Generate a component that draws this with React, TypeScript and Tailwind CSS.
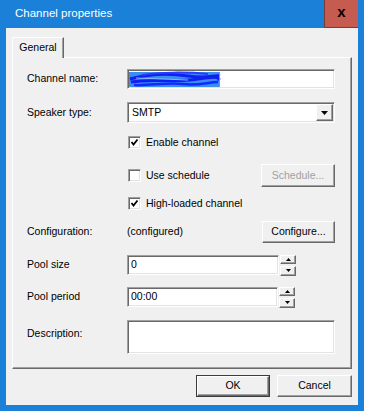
import React from "react";

const raised =
  "border border-t-white border-l-white border-r-[#696969] border-b-[#696969] shadow-[inset_-1px_-1px_0_#a0a0a0] bg-[#f0f0f0]";
const sunken =
  "border border-t-[#a0a0a0] border-l-[#a0a0a0] border-r-white border-b-white shadow-[inset_1px_1px_0_#696969,inset_-1px_-1px_0_#e3e3e3] bg-white";

function Checkbox({ checked }: { checked?: boolean }) {
  return (
    <div className={`${sunken} flex h-[13px] w-[13px] items-center justify-center`}>
      {checked && (
        <svg width="9" height="9" viewBox="0 0 9 9">
          <polyline points="1.5,4 3.5,6.5 7.5,1.5" fill="none" stroke="#000" strokeWidth="1.8" />
        </svg>
      )}
    </div>
  );
}

function Spinner() {
  return (
    <div className="ml-px flex h-[21px] flex-col justify-between">
      <div className={`${raised} flex h-[9px] w-[16px] items-center justify-center`}>
        <svg width="5" height="3" viewBox="0 0 5 3">
          <polygon points="0,3 5,3 2.5,0" fill="#000" />
        </svg>
      </div>
      <div className={`${raised} flex h-[10px] w-[16px] items-center justify-center`}>
        <svg width="5" height="3" viewBox="0 0 5 3">
          <polygon points="0,0 5,0 2.5,3" fill="#000" />
        </svg>
      </div>
    </div>
  );
}

function Label({ children }: { children: React.ReactNode }) {
  return <div className="w-[100px] shrink-0">{children}</div>;
}

export default function App() {
  return (
    <div
      className="flex h-[411px] w-[367px] overflow-hidden bg-white text-[10.5px] text-black"
      style={{ fontFamily: '"Liberation Sans", Arial, sans-serif' }}
    >
      <div className="flex w-[364px] flex-col bg-[#1a80d8]">
        {/* title bar */}
        <div className="flex h-[28px] items-center pr-[6px]">
          <span className="pl-[15px] text-[11.5px] text-white">Channel properties</span>
          <div className="ml-auto flex h-[28px] w-[34px] items-center justify-center border-b border-l border-[#7a3b36] bg-[#c65b50] pb-[3px] text-[15px] font-bold">
            x
          </div>
        </div>

        {/* client area */}
        <div className="mx-[6px] flex h-[377px] flex-col bg-[#f0f0f0]">
          <div className="flex pl-[6px] pt-[9px]">
            <div className="relative z-10 -mb-px flex h-[21px] w-[52px] items-center justify-center border-l border-t border-r border-white border-r-[#696969] bg-[#f0f0f0] shadow-[inset_-1px_0_0_#a0a0a0]">
              General
            </div>
          </div>

          <div className={`${raised} mx-[6px] flex h-[312px] flex-col pl-[14px] pr-[16px]`}>
            <div className="mt-[11px] flex h-[20px] items-center">
              <Label>Channel name:</Label>
              <div className={`${sunken} relative h-[20px] flex-1`}>
                <div className="absolute left-[1px] top-[2px] h-[15px] w-[90px] bg-[#3a8ef0]" />
                <svg className="absolute left-0 top-0" width="96" height="20" viewBox="0 0 96 20">
                  <path d="M2 9 C20 4, 40 3, 60 6 S85 5, 92 6" fill="none" stroke="#1020f0" strokeWidth="3" />
                  <path d="M3 12 C25 8, 45 13, 70 9 S88 8, 92 10" fill="none" stroke="#1020f0" strokeWidth="3" />
                  <path d="M6 15 C20 16, 40 12, 55 14 S80 12, 90 12" fill="none" stroke="#1528ff" strokeWidth="2.5" />
                  <path d="M14 5 C30 2, 60 2, 80 4" fill="none" stroke="#2a3cff" strokeWidth="2" />
                  <path d="M8 8 L60 10" fill="none" stroke="#8ab8ff" strokeWidth="1" />
                </svg>
                <div className="absolute left-[91px] top-[2px] h-[15px] w-px bg-[#e08020]" />
              </div>
            </div>

            <div className="mt-[13px] flex h-[21px] items-center">
              <Label>Speaker type:</Label>
              <div className={`${sunken} flex h-[21px] flex-1 items-center pl-[4px] pr-[1px]`}>
                <span className="flex-1">SMTP</span>
                <div className={`${raised} flex h-[17px] w-[17px] items-center justify-center`}>
                  <svg width="7" height="4" viewBox="0 0 7 4">
                    <polygon points="0,0 7,0 3.5,4" fill="#000" />
                  </svg>
                </div>
              </div>
            </div>

            <div className="mt-[13px] flex h-[13px] items-center">
              <Label> </Label>
              <div className="ml-px flex items-center gap-[5px]">
                <Checkbox checked />
                <span>Enable channel</span>
              </div>
            </div>

            <div className="mt-[15px] flex h-[23px] items-center">
              <Label> </Label>
              <div className="ml-px flex items-center gap-[5px]">
                <Checkbox />
                <span>Use schedule</span>
              </div>
              <div className={`${raised} ml-auto flex h-[23px] w-[74px] items-center justify-center text-[#a0a0a0]`}>
                Schedule...
              </div>
            </div>

            <div className="mt-[10px] flex h-[13px] items-center">
              <Label> </Label>
              <div className="ml-px flex items-center gap-[5px]">
                <Checkbox checked />
                <span>High-loaded channel</span>
              </div>
            </div>

            <div className="mt-[11px] flex h-[22px] items-center">
              <Label>Configuration:</Label>
              <span>(configured)</span>
              <div className={`${raised} ml-auto flex h-[22px] w-[73px] items-center justify-center`}>
                Configure...
              </div>
            </div>

            <div className="mt-[12px] flex h-[20px] items-center">
              <Label>Pool size</Label>
              <div className={`${sunken} flex h-[20px] w-[152px] items-center pl-[3px]`}>0</div>
              <Spinner />
            </div>

            <div className="mt-[12px] flex h-[20px] items-center">
              <Label>Pool period</Label>
              <div className={`${sunken} flex h-[20px] w-[151px] items-center pl-[3px]`}>00:00</div>
              <Spinner />
            </div>

            <div className="mt-[13px] flex h-[34px] items-start">
              <div className="w-[100px] shrink-0 pt-[6px]">Description:</div>
              <div className={`${sunken} h-[34px] flex-1`} />
            </div>
          </div>

          <div className="mt-[6px] flex justify-end gap-[7px] pr-[6px]">
            <div className="border border-[#3c3c3c]">
              <div className={`${raised} flex h-[20px] w-[72px] items-center justify-center`}>OK</div>
            </div>
            <div className={`${raised} flex h-[22px] w-[75px] items-center justify-center`}>Cancel</div>
          </div>
        </div>
      </div>
      <div className="w-[3px] bg-white" />
    </div>
  );
}
